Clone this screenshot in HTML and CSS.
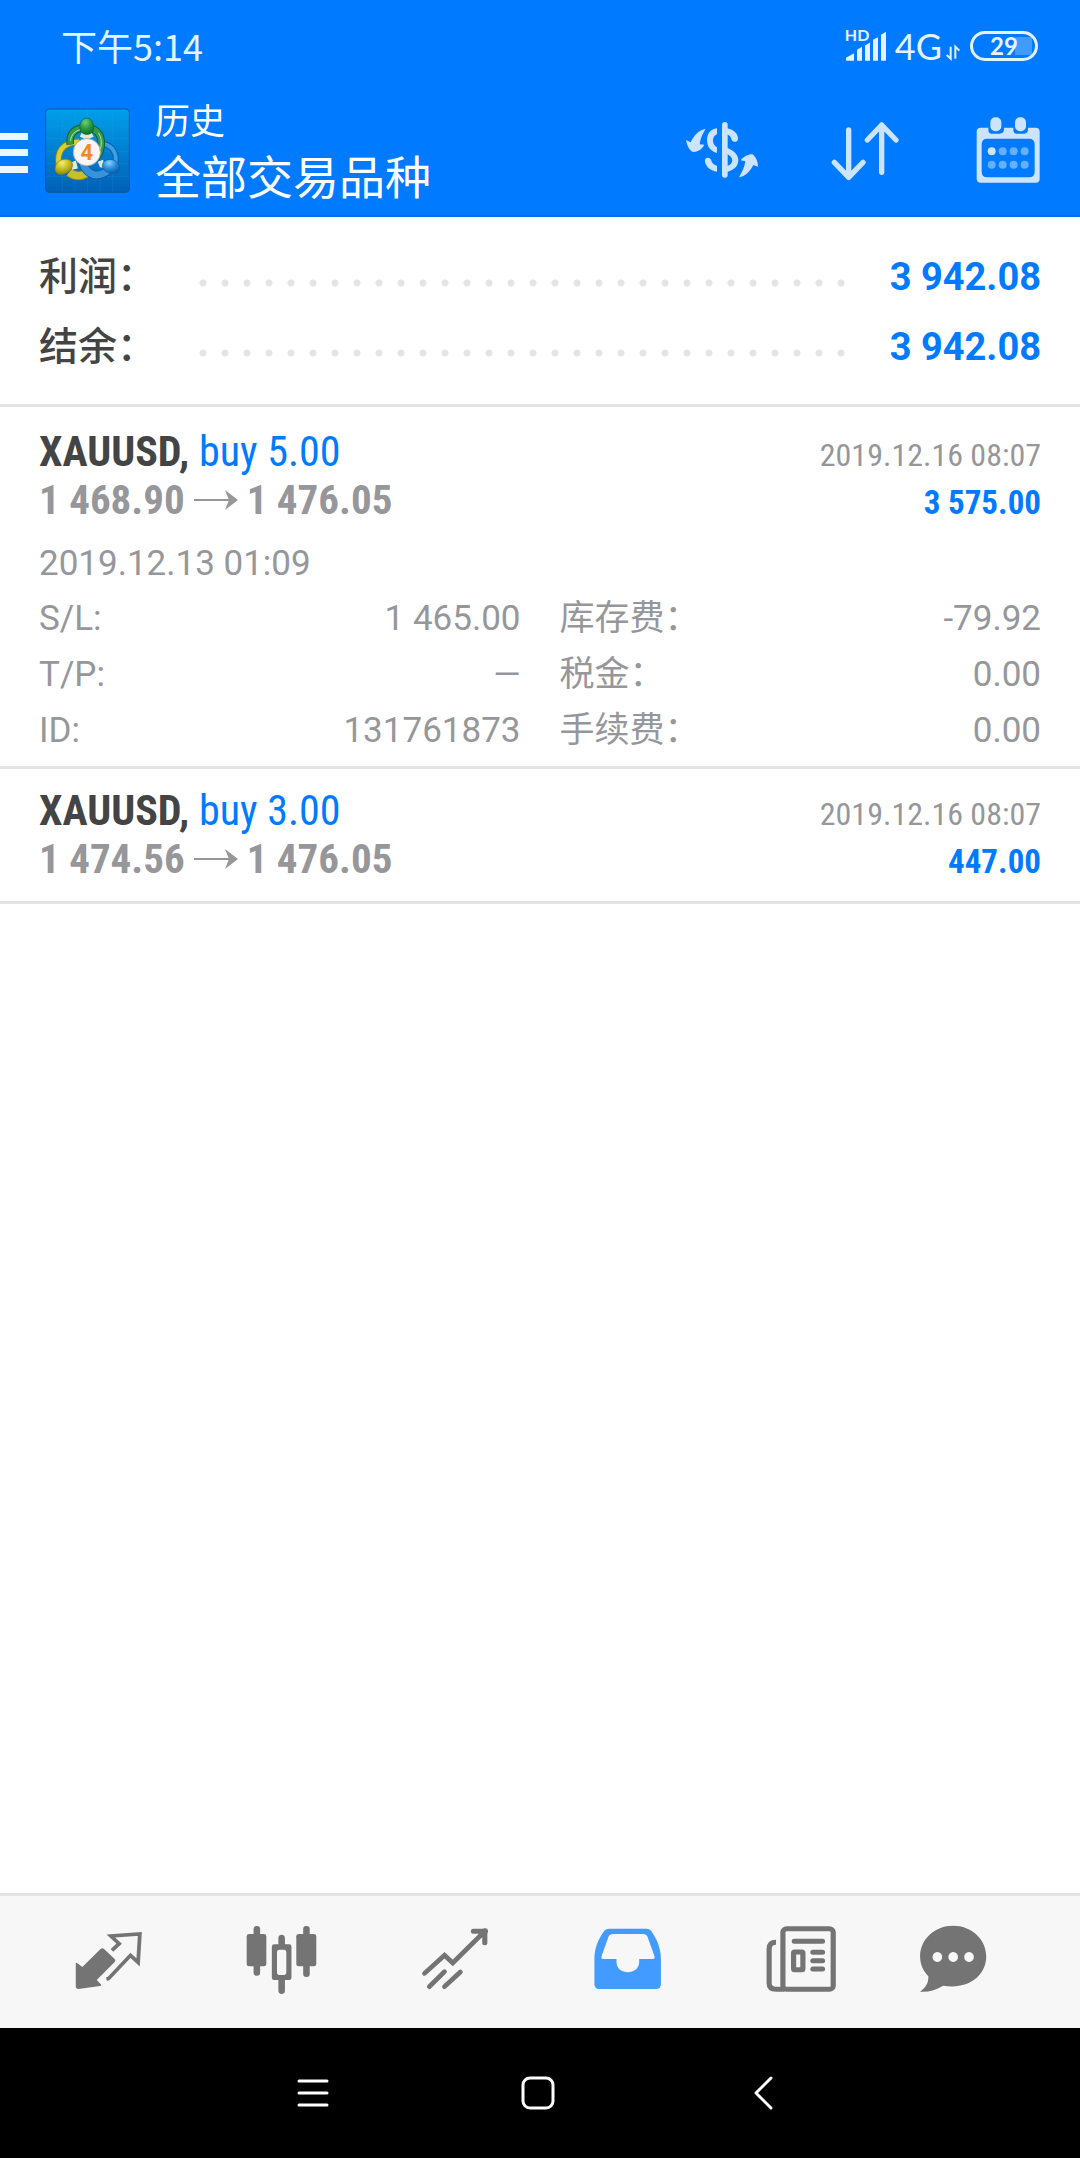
FILE: index.html
```html
<!DOCTYPE html>
<html lang="zh-CN">
<head>
<meta charset="utf-8">
<meta name="viewport" content="width=device-width, initial-scale=1">
<title>历史</title>
<link rel="stylesheet" href="styles.css">
</head>
<body>
<div class="app">
  <header class="header">
    <div class="status">
      <span class="status-time">下午5:14</span>
      <div class="status-icons">
        <div class="signal">
          <span class="signal-hd">HD</span>
          <svg class="signal-bars" viewBox="558 85 126 95" fill="currentColor" aria-hidden="true">
            <path d="M561 177v-9l24-14v23zM594 177v-33l15-9v42zM618 177v-46l15-9v55zM642 177v-63l15-8v71zM666 177v-78l15-9v87z"/>
          </svg>
        </div>
        <span class="network">4G</span>
        <svg class="data-arrows" viewBox="860 130 42 48" fill="none" stroke="currentColor" stroke-width="6" aria-hidden="true">
          <path d="M874 138v36l-12-11M888 174v-36l12 12"/>
        </svg>
        <span class="battery">29</span>
      </div>
    </div>
    <div class="toolbar">
      <button class="menu" aria-label="菜单">
        <svg class="menu-icon" viewBox="0 0 28 40" fill="currentColor"><path d="M0 0h28v7H0zM0 16h28v7H0zM0 33h28v7H0z"/></svg>
      </button>
      <svg class="logo" viewBox="17 24 256 256" aria-hidden="true">
        <defs>
          <linearGradient id="bg" x1="0" y1="0" x2="0" y2="1"><stop offset="0" stop-color="#009fea"/><stop offset="1" stop-color="#0060b8"/></linearGradient>
          <radialGradient id="green" cx=".4" cy=".25" r=".8"><stop offset="0" stop-color="#6fd07c"/><stop offset=".5" stop-color="#2b9a43"/><stop offset="1" stop-color="#0e6a2c"/></radialGradient>
          <radialGradient id="yellow" cx=".4" cy=".25" r=".8"><stop offset="0" stop-color="#f2ee7c"/><stop offset=".5" stop-color="#c3bd1e"/><stop offset="1" stop-color="#857f0a"/></radialGradient>
          <radialGradient id="blue" cx=".4" cy=".25" r=".8"><stop offset="0" stop-color="#8bd0fa"/><stop offset=".5" stop-color="#2a8edb"/><stop offset="1" stop-color="#0b5ba8"/></radialGradient>
        </defs>
        <rect x="19" y="27" width="252" height="251" rx="10" fill="url(#bg)" stroke="#0557a8" stroke-width="3"/>
        <path d="M69 29v247M107 29v247M145 29v247M183 29v247M221 29v247M21 78h248M21 116h248M21 154h248M21 192h248M21 230h248" stroke="#38b4f4" stroke-opacity=".22" stroke-width="2"/>
        <path d="M60 200c-10-44 10-73 60-74" fill="none" stroke="#8a850f" stroke-width="20"/>
        <path d="M60 200c-10-44 10-73 60-74" fill="none" stroke="#d6d034" stroke-width="14"/>
        <path d="M228 192c8-28-6-55-38-61" fill="none" stroke="#0a5ea8" stroke-width="18"/>
        <path d="M228 192c8-28-6-55-38-61" fill="none" stroke="#3d9fe2" stroke-width="12"/>
        <path d="M90 218c20 16 46 12 62-8" fill="none" stroke="#8a850f" stroke-width="28"/>
        <path d="M90 218c20 16 46 12 62-8" fill="none" stroke="#c6c02a" stroke-width="22"/>
        <path d="M130 190c16 38 46 48 82 18" fill="none" stroke="#0b5ba8" stroke-width="27"/>
        <path d="M130 190c16 38 46 48 82 18" fill="none" stroke="#3593dc" stroke-width="21"/>
        <path d="M93 134c-4-36 16-51 50-51 36 2 52 32 39 74l-12 18" fill="none" stroke="#12602b" stroke-width="23"/>
        <path d="M93 134c-4-36 16-51 50-51 36 2 52 32 39 74l-12 18" fill="none" stroke="#35994a" stroke-width="17"/>
        <path d="M94 123c2-20 14-30 30-34M178 99c9 14 11 30 6 48" fill="none" stroke="#b9e8ae" stroke-width="3"/>
        <path d="M122 110l20 10 22-10-8-12h-28zM92 190l18-8 6 24-18 4zM176 186l16-6 4 26-14-4z" fill="#dcebd8"/>
        <path d="M122 87c-4-42 44-44 42 0-4 22-38 22-42 0z" fill="url(#green)" stroke="#0e6a2c" stroke-width="2"/>
        <path d="M86 179c20 4 16 28 3 37-18 14-46 10-41-12 2-18 18-29 38-25z" fill="url(#yellow)" stroke="#857f0a" stroke-width="2"/>
        <path d="M210 179c20-2 30 14 31 26 0 18-28 20-42 9-16-10-10-34 11-35z" fill="url(#blue)" stroke="#0b5ba8" stroke-width="2"/>
        <circle cx="143" cy="157" r="41" fill="#f7f6f4" stroke="#a9a9a9" stroke-width="3"/>
        <text x="143" y="181" class="logo-digit" text-anchor="middle">4</text>
      </svg>
      <div class="titles">
        <span class="subtitle">历史</span>
        <h1 class="title">全部交易品种</h1>
      </div>
      <button class="action" aria-label="货币">
        <svg class="action-icon" viewBox="78 340 216 216" fill="currentColor">
          <path d="M137 384c-9 15-16 28-18 47l14 1c-7 12-16 20-32 22-10 0-20-18-23-36l14 7c10-22 24-36 45-41z"/>
          <path d="M237 530c9-16 17-30 19-48l-14-3c8-10 20-18 35-18 9 6 17 20 17 37l-14-5c-10 20-24 34-43 37z"/>
          <path d="M171 383c-20 3-30 16-30 36 0 21 12 33 30 38v-17c-16-9-16-32 0-40z"/>
          <path d="M171 495c-10-3-14-8-17-15-3-12-22-12-19 4 4 16 17 26 36 29z"/>
          <rect x="186" y="364" width="17" height="167" rx="8"/>
          <path d="M200 383c19 2 34 15 34 31 0 12-16 12-19 3-2-9-7-13-15-17z"/>
          <path d="M200 441c21 8 35 20 35 38 0 18-14 30-35 35v-17c22-7 23-27 0-38z"/>
        </svg>
      </button>
      <button class="action" aria-label="排序">
        <svg class="action-icon" viewBox="507 340 216 216" fill="none" stroke="currentColor" stroke-width="16" stroke-linecap="round" stroke-linejoin="round">
          <path d="M566 388v142M523 485l43 45 43-45M665 515V373M622 418l43-45 43 45"/>
        </svg>
      </button>
      <button class="action" aria-label="日期">
        <svg class="action-icon" viewBox="937 340 216 216" fill="currentColor">
          <path fill-rule="evenodd" d="M963 381h23v4c0 18 10 14 22 14s25 2 25-14v-4h28v4c0 18 10 14 22 14s22 2 22-14v-4h23q12 0 12 12v141q0 12-12 12H963q-12 0-12-12V393q0-12 12-12zM983 414q-17 0-17 17v82q0 17 17 17h125q17 0 17-17v-82q0-17-17-17z"/>
          <rect x="992" y="350" width="33" height="42" rx="15"/><rect x="1066" y="350" width="33" height="42" rx="15"/>
          <circle cx="996" cy="452" r="12"/>
          <g opacity=".5"><circle cx="1029" cy="452" r="12"/><circle cx="1062" cy="452" r="12"/><circle cx="1095" cy="452" r="12"/><circle cx="996" cy="492" r="12"/><circle cx="1029" cy="492" r="12"/><circle cx="1062" cy="492" r="12"/><circle cx="1095" cy="492" r="12"/></g>
        </svg>
      </button>
    </div>
  </header>

  <main class="content">
    <dl class="summary">
      <div class="summary-row"><dt class="summary-label">利润：</dt><dd class="summary-value">3 942.08</dd></div>
      <div class="summary-row"><dt class="summary-label">结余：</dt><dd class="summary-value">3 942.08</dd></div>
    </dl>

    <article class="deal">
      <div class="deal-row">
        <h2 class="deal-title">XAUUSD, <span class="deal-type">buy 5.00</span></h2>
        <time class="deal-time">2019.12.16 08:07</time>
      </div>
      <div class="deal-row">
        <div class="prices"><span>1 468.90</span>
          <svg class="arrow" viewBox="0 0 44 22" role="img" aria-label="至"><path d="M0 11h36" stroke="currentColor" stroke-width="2"/><path d="M31 1l13 10-13 10 4-10z" fill="currentColor"/></svg>
          <span>1 476.05</span></div>
        <span class="deal-profit">3 575.00</span>
      </div>
      <time class="open-time">2019.12.13 01:09</time>
      <dl class="details">
        <div class="detail"><dt>S/L:</dt><dd>1 465.00</dd></div>
        <div class="detail"><dt>库存费：</dt><dd>-79.92</dd></div>
        <div class="detail"><dt>T/P:</dt><dd>—</dd></div>
        <div class="detail"><dt>税金：</dt><dd>0.00</dd></div>
        <div class="detail"><dt>ID:</dt><dd>131761873</dd></div>
        <div class="detail"><dt>手续费：</dt><dd>0.00</dd></div>
      </dl>
    </article>

    <article class="deal">
      <div class="deal-row">
        <h2 class="deal-title">XAUUSD, <span class="deal-type">buy 3.00</span></h2>
        <time class="deal-time">2019.12.16 08:07</time>
      </div>
      <div class="deal-row">
        <div class="prices"><span>1 474.56</span>
          <svg class="arrow" viewBox="0 0 44 22" role="img" aria-label="至"><path d="M0 11h36" stroke="currentColor" stroke-width="2"/><path d="M31 1l13 10-13 10 4-10z" fill="currentColor"/></svg>
          <span>1 476.05</span></div>
        <span class="deal-profit">447.00</span>
      </div>
    </article>
  </main>

  <nav class="tabs">
    <button class="tab" aria-label="行情">
      <svg class="tab-icon" viewBox="211 138 209 216" preserveAspectRatio="none">
        <path d="M219 252q0-6 5-2l14 11 53-54q5-5 10 0l31 30q4 4 0 9l-52 54 11 12q5 5-2 6l-62 9q-8 0-8-8z" fill="currentColor"/>
        <path d="M324 211l21-20-24-23 84-6-5 85-22-21-64 70-6 1" fill="none" stroke="currentColor" stroke-width="11"/>
      </svg>
    </button>
    <button class="tab" aria-label="图表">
      <svg class="tab-icon" viewBox="713 138 209 216" preserveAspectRatio="none" fill="currentColor">
        <rect x="735" y="138" width="19" height="149" rx="9"/><rect x="715" y="162" width="57" height="97" rx="7"/>
        <rect x="879" y="138" width="19" height="153" rx="9"/><rect x="859" y="162" width="58" height="97" rx="7"/>
        <path fill-rule="evenodd" d="M807 193v-20c0-12 19-12 19 0v20h12q7 0 7 7v93q0 7-7 7h-12v33c0 12-19 12-19 0v-33h-12q-7 0-7-7v-93q0-7 7-7zM810 209q-7 0-7 8v60q0 8 7 8h13q7 0 7-8v-60q0-8-7-8z"/>
      </svg>
    </button>
    <button class="tab" aria-label="交易">
      <svg class="tab-icon" viewBox="1215 138 209 216" preserveAspectRatio="none" fill="none" stroke="currentColor" stroke-width="14" stroke-linecap="round">
        <path d="M1231 280l58-54 24 23 86-88"/><path d="M1373 154h33v34" stroke-width="15"/>
        <path d="M1397 163l9-9" stroke-width="18"/>
        <path d="M1245 320l44-45M1289 320l46-44"/>
      </svg>
    </button>
    <button class="tab tab-active" aria-label="历史">
      <svg class="tab-icon" viewBox="150 138 209 216" preserveAspectRatio="none" fill="currentColor">
        <path fill-rule="evenodd" d="M200 146h108q9 0 14 7c17 25 28 52 28 84v76q0 14-14 14H171q-14 0-14-14v-76c0-32 11-59 28-84q6-7 15-7zM211 162q-10 0-13 8l-20 57q-3 10 6 10h37v8c0 42 66 42 66 0v-8h38q9 0 6-10l-20-57q-3-8-13-8z"/>
      </svg>
    </button>
    <button class="tab" aria-label="新闻">
      <svg class="tab-icon" viewBox="653 138 209 216" preserveAspectRatio="none" fill="none" stroke="currentColor" stroke-width="15">
        <rect x="705" y="146" width="146" height="182" rx="11"/>
        <path d="M685 187q-20 0-20 20v102q0 19 20 19h25"/>
        <path d="M738 184h82M792 217h28M792 242h28M792 267h28" stroke-linecap="round"/>
        <rect x="736" y="216" width="27" height="53" rx="3"/>
      </svg>
    </button>
    <button class="tab" aria-label="消息">
      <svg class="tab-icon" viewBox="1094 138 209 216" preserveAspectRatio="none" fill="currentColor">
        <path fill-rule="evenodd" d="M1199 137c54 0 96 41 96 92 0 60-55 101-125 88-20 12-42 20-67 18 20-15 24-28 24-46-16-17-24-37-24-60 0-51 42-92 96-92zM1153 216a14 15 0 1 0 .1 0zM1199 216a14 15 0 1 0 .1 0zM1245 216a14 15 0 1 0 .1 0z"/>
      </svg>
    </button>
  </nav>

  <nav class="system">
    <button class="system-button" aria-label="最近任务">
      <svg class="system-icon" viewBox="0 0 34 34" fill="none" stroke="currentColor" stroke-width="3" stroke-linecap="round"><path d="M3 5h28M3 17h28M3 29h28"/></svg>
    </button>
    <button class="system-button" aria-label="主屏幕">
      <svg class="system-icon" viewBox="0 0 34 34" fill="none" stroke="currentColor" stroke-width="3"><rect x="2" y="2" width="30" height="30" rx="7"/></svg>
    </button>
    <button class="system-button" aria-label="返回">
      <svg class="system-icon" viewBox="0 0 34 34" fill="none" stroke="currentColor" stroke-width="3" stroke-linecap="round" stroke-linejoin="round"><path d="M25 2L10 17l15 15"/></svg>
    </button>
  </nav>
</div>
</body>
</html>
```
FILE: styles.css
```css
* {
  box-sizing: border-box;
}

body {
  margin: 0;
  background: #fff;
  color: #96979b;
  font-family: Roboto, "Noto Sans CJK SC", sans-serif;
  font-size: 35px;
}

h1, h2, dl, dd {
  margin: 0;
}

button {
  display: flex;
  align-items: center;
  justify-content: center;
  padding: 0;
  border: 0;
  background: none;
  color: inherit;
}

svg {
  display: block;
  overflow: visible;
}

.app {
  display: flex;
  flex-direction: column;
  min-height: 100vh;
}

/* Header */
.header {
  background: #007aff;
  border-bottom: 2px solid #0070ea;
  color: #fff;
}

.status {
  display: flex;
  align-items: center;
  justify-content: space-between;
  height: 84px;
  padding: 7px 42px 0 61px;
  color: #e5f2ff;
}

.status-time {
  padding-bottom: 2px;
  font-family: "Noto Sans CJK SC", sans-serif;
  font-size: 36px;
  line-height: 52px;
}

.status-icons {
  display: flex;
  align-items: center;
}

.signal {
  position: relative;
  width: 42px;
}

.signal-bars {
  width: 42px;
  height: 32px;
}

.signal-hd {
  position: absolute;
  top: -3px;
  left: 0;
  font-family: Lato, sans-serif;
  font-size: 16px;
  font-weight: 700;
  line-height: 16px;
}

.network {
  margin-left: 8px;
  font-family: Lato, sans-serif;
  font-size: 36px;
  line-height: 40px;
}

.data-arrows {
  width: 14px;
  height: 16px;
  margin: 12px 10px 0 4px;
}

.battery {
  width: 68px;
  height: 30px;
  border: 3px solid currentColor;
  border-radius: 15px;
  background: linear-gradient(#409bff, #409bff) 42px 3px / 17px 18px no-repeat;
  font-family: Lato, sans-serif;
  font-size: 24px;
  font-weight: 700;
  line-height: 24px;
  text-align: center;
}

.toolbar {
  display: flex;
  align-items: center;
  height: 131px;
  padding-right: 1px;
}

.menu {
  width: 45px;
  justify-content: flex-start;
  padding-top: 6px;
  color: #edf6ff;
}

.menu-icon {
  width: 28px;
  height: 40px;
}

.logo {
  width: 85px;
  height: 85px;
  margin-top: 2px;
}

.logo-digit {
  fill: #f08a24;
  font-size: 66px;
  font-weight: 700;
}

.titles {
  display: flex;
  flex: 1;
  flex-direction: column;
  padding: 0 0 5px 25px;
  font-family: "Noto Sans CJK SC", sans-serif;
}

.subtitle {
  font-size: 35px;
  line-height: 54px;
}

.title {
  font-size: 46px;
  font-weight: 400;
  line-height: 57px;
}

.action {
  width: 143px;
  height: 100px;
  color: #cce4ff;
}

.action-icon {
  width: 72px;
  height: 72px;
}

/* Totals */
.content {
  flex: 1;
}

.summary {
  margin-bottom: 3px;
  padding: 25px 39px 22px;
  border-bottom: 3px solid #e4e4e4;
  color: #444;
  font-weight: 700;
}

.summary-row {
  display: flex;
  align-items: center;
  justify-content: space-between;
  height: 70px;
  background: radial-gradient(circle, #e4e4e4 3px, transparent 4px) 153px 30px / 22px 22px repeat-x content-box;
}

.summary-label {
  width: 153px;
  background: #fff;
  font-size: 39px;
  font-weight: 500;
  line-height: 60px;
}

.summary-value {
  width: 189px;
  background: #fff;
  color: #007aff;
  font-size: 38px;
  line-height: 60px;
  text-align: right;
}

/* Deals */
.deal {
  padding: 18px 39px 7px;
  border-bottom: 3px solid #e4e4e4;
}

.deal:last-child {
  padding-bottom: 18px;
}

.deal-row {
  display: flex;
  align-items: baseline;
  justify-content: space-between;
  height: 48px;
  font-family: "Roboto Condensed", "Liberation Sans Narrow", Roboto, sans-serif;
  font-size: 33px;
  line-height: 48px;
}

.deal-title {
  color: #444;
  font-size: 42px;
  font-weight: 700;
}

.deal-type {
  color: #007aff;
  font-weight: 400;
}

.prices {
  display: flex;
  align-items: center;
  gap: 9px;
  font-size: 41px;
  font-weight: 700;
}

.arrow {
  width: 44px;
  height: 22px;
}

.deal-time {
  font-size: 32px;
}

.deal-profit {
  color: #007aff;
  font-weight: 700;
}

.open-time {
  display: block;
  margin-top: 13px;
  line-height: 54px;
}

.details {
  display: grid;
  grid-template-columns: 1fr 1fr;
  column-gap: 39px;
}

.detail {
  display: flex;
  justify-content: space-between;
  height: 56px;
  line-height: 56px;
}

.detail dt {
  font-weight: 400;
}

/* Bottom bars */
.tabs {
  display: grid;
  grid-template-columns: repeat(5, 173fr) 131fr;
  height: 135px;
  padding: 0 62px 0 22px;
  border-top: 3px solid #e4e4e4;
  background: #f7f7f7;
  color: #747474;
}

.tab-active {
  color: #429cff;
}

.tab-icon {
  width: 72px;
  height: 72px;
}

.system {
  display: grid;
  grid-template-columns: repeat(3, 225px);
  justify-content: center;
  height: 130px;
  padding-right: 4px;
  background: #000;
  color: #fff;
}

.system-icon {
  width: 34px;
  height: 34px;
}
```
